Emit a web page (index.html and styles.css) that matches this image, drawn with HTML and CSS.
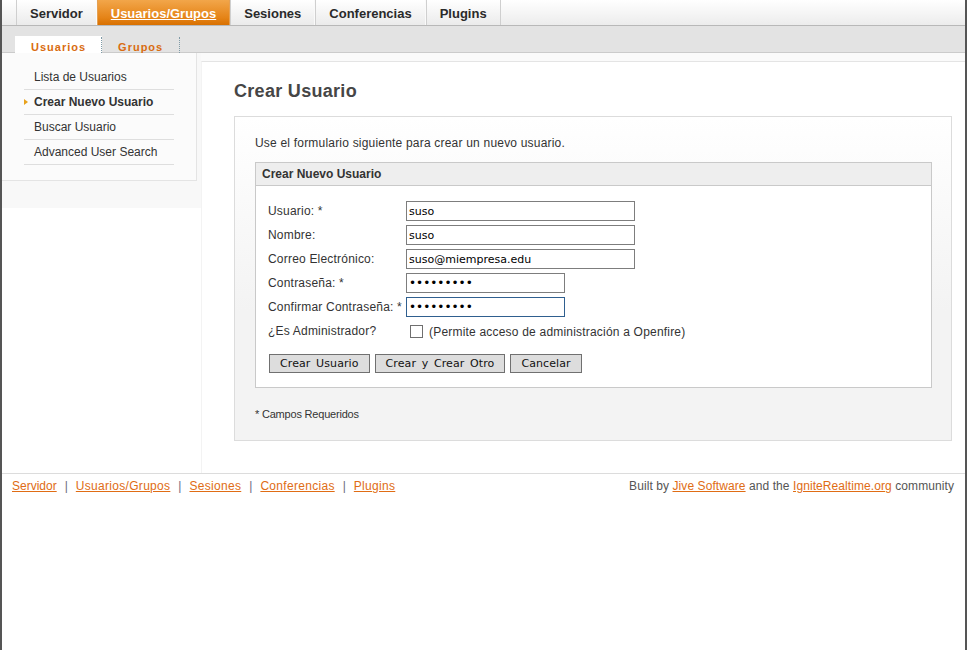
FILE: index.html
```html
<!DOCTYPE html>
<html lang="es">
<head>
<meta charset="utf-8">
<title>Crear Usuario</title>
<link rel="stylesheet" href="styles.css">
</head>
<body>
<div class="frame">
  <div class="tabs">
    <a class="tab" href="#">Servidor</a>
    <a class="tab active" href="#">Usuarios/Grupos</a>
    <a class="tab" href="#">Sesiones</a>
    <a class="tab" href="#">Conferencias</a>
    <a class="tab" href="#">Plugins</a>
  </div>
  <div class="subtabs">
    <a class="subtab active" href="#">Usuarios</a>
    <a class="subtab" href="#">Grupos</a>
  </div>
  <div class="content">
    <div class="sidebar">
      <div class="sidebox">
        <ul class="nav">
          <li><a href="#">Lista de Usuarios</a></li>
          <li class="current"><a href="#">Crear Nuevo Usuario</a></li>
          <li><a href="#">Buscar Usuario</a></li>
          <li><a href="#">Advanced User Search</a></li>
        </ul>
      </div>
    </div>
    <div class="main">
      <div class="main-inner">
        <h1 class="title">Crear Usuario</h1>
        <div class="box">
          <p class="intro">Use el formulario siguiente para crear un nuevo usuario.</p>
          <div class="panel">
            <div class="panel-head">Crear Nuevo Usuario</div>
            <div class="panel-body">
              <div class="fields">
                <label class="lbl">Usuario: *</label>
                <input class="inp wide" type="text" value="suso">
                <label class="lbl">Nombre:</label>
                <input class="inp wide" type="text" value="suso">
                <label class="lbl">Correo Electrónico:</label>
                <input class="inp wide" type="text" value="suso@miempresa.edu">
                <label class="lbl">Contraseña: *</label>
                <input class="inp narrow pw" type="password" value="suso12345">
                <label class="lbl">Confirmar Contraseña: *</label>
                <input class="inp narrow pw focus" type="password" value="suso12345">
                <label class="lbl">¿Es Administrador?</label>
                <div class="check-row"><input class="chk" type="checkbox"><span class="check-text">(Permite acceso de administración a Openfire)</span></div>
              </div>
              <div class="buttons">
                <button class="btn" type="button">Crear Usuario</button>
                <button class="btn" type="button">Crear y Crear Otro</button>
                <button class="btn" type="button">Cancelar</button>
              </div>
            </div>
          </div>
          <p class="req">* Campos Requeridos</p>
        </div>
      </div>
    </div>
  </div>
  <div class="footer">
    <div class="foot-links">
      <a href="#">Servidor</a><span class="sep">|</span><a href="#">Usuarios/Grupos</a><span class="sep">|</span><a href="#">Sesiones</a><span class="sep">|</span><a href="#">Conferencias</a><span class="sep">|</span><a href="#">Plugins</a>
    </div>
    <div class="built">Built by <a href="#">Jive Software</a> and the <a href="#">IgniteRealtime.org</a> community</div>
  </div>
</div>
</body>
</html>
```
FILE: styles.css
```css
* { box-sizing: border-box; }
html, body { margin: 0; padding: 0; background: #fff; }
body { font-family: "Liberation Sans", Arial, sans-serif; font-size: 12px; color: #333; }

.frame {
  width: 967px;
  min-height: 650px;
  border-left: 2px solid #555;
  border-right: 2px solid #555;
  background: #fff;
}

/* top tabs */
.tabs {
  height: 26px;
  display: flex;
  padding-left: 14px;
  background: linear-gradient(#ffffff, #ececec);
  border-bottom: 1px solid #b8b8b8;
}
.tab {
  display: block;
  height: 25px;
  line-height: 27px;
  padding: 0 13px;
  font-size: 13px;
  font-weight: bold;
  color: #2a2a2a;
  text-decoration: none;
  border-left: 1px solid #cfcfcf;
  border-right: 1px solid #fafafa;
  background: linear-gradient(#ffffff, #ebebeb);
}
.tab:last-child { border-right: 1px solid #cfcfcf; }
.tab.active {
  color: #fff;
  text-decoration: underline;
  background: linear-gradient(#f2a64a, #e58418 70%, #d87000);
  border-left-color: #e5a052;
  border-right-color: #e5a052;
}

/* sub tabs */
.subtabs {
  height: 27px;
  display: flex;
  align-items: flex-end;
  padding-left: 13px;
  background: #e3e3e3;
  border-bottom: 1px solid #cbcbcb;
}
.subtab {
  display: block;
  height: 16px;
  line-height: 21px;
  margin-bottom: -1px;
  font-size: 11px;
  font-weight: bold;
  letter-spacing: 1px;
  color: #d96c10;
  text-decoration: none;
  padding: 0 16px;
  border-right: 1px dotted #7f9aa6;
}
.subtab.active {
  background: #fff;
  padding: 0 15px 0 16px;
  box-shadow: 0 -1px 0 #fff;
}

/* content */
.content {
  display: flex;
  height: 420px;
}
.sidebar {
  width: 199px;
  height: 155px;
  flex: none;
  background: #f8f8f8;
}
.sidebox {
  width: 195px;
  height: 128px;
  padding: 12px 0 0 22px;
  border-right: 1px solid #e4e4e4;
  border-bottom: 1px solid #e4e4e4;
  background: #fbfbfb;
}
.nav {
  list-style: none;
  margin: 0;
  padding: 0;
  width: 150px;
}
.nav li {
  height: 25px;
  border-bottom: 1px solid #dedede;
  position: relative;
}
.nav a {
  display: block;
  line-height: 24px;
  padding-left: 10px;
  color: #333;
  text-decoration: none;
  font-size: 12px;
}
.nav li.current a { font-weight: bold; }
.nav li.current::before {
  content: "";
  position: absolute;
  left: 0;
  top: 9px;
  border-left: 4px solid #e8a21c;
  border-top: 3.5px solid transparent;
  border-bottom: 3.5px solid transparent;
}

.main {
  flex: 1;
  padding-top: 8px;
  background: #fafafa;
}
.main-inner {
  height: 100%;
  background: #fff;
  border-top: 1px solid #e4e4e4;
  border-left: 1px solid #f3f3f3;
  padding: 0 13px 0 32px;
}
.title {
  margin: 18px 0 14px;
  font-size: 18px;
  line-height: 22px;
  font-weight: bold;
  color: #464646;
  letter-spacing: 0.3px;
}

.box {
  height: 325px;
  border: 1px solid #dcdcdc;
  background: linear-gradient(#ffffff, #f3f3f3 60%);
  padding: 19px 19px 0 20px;
}
.intro {
  margin: 0 0 11px;
  line-height: 15px;
  letter-spacing: 0.2px;
}
.panel { background: #fff; }
.panel-head {
  height: 24px;
  line-height: 22px;
  border: 1px solid #c9c9c9;
  background: #eeeeee;
  font-weight: bold;
  padding-left: 6px;
}
.panel-body {
  border: 1px solid #c9c9c9;
  border-top: none;
  padding: 15px 12px 14px 12px;
}
.fields {
  display: grid;
  grid-template-columns: 138px auto;
  grid-auto-rows: 20px;
  row-gap: 4px;
  align-items: center;
}
.lbl { line-height: 15px; letter-spacing: 0.2px; }
.inp {
  height: 20px;
  border: 1px solid #7d7d7d;
  padding: 0 2px;
  font-family: "DejaVu Sans", Verdana, sans-serif;
  font-size: 11px;
  color: #000;
  outline: none;
  margin: 0;
}
.inp.pw { font-size: 12px; }
.inp.wide { width: 229px; }
.inp.narrow { width: 159px; }
.inp.focus { border-color: #2f5f8f; }
.check-row {
  display: flex;
  align-items: center;
  height: 20px;
  padding-top: 1px;
}
.check-text { letter-spacing: 0.2px; }
.chk {
  -webkit-appearance: none;
  appearance: none;
  width: 13px;
  height: 13px;
  margin: 0 6px 0 4px;
  border: 1px solid #6f6f6f;
  background: #fff;
}
.buttons {
  display: flex;
  gap: 5px;
  margin-top: 13px;
  padding-left: 1px;
}
.btn {
  height: 19px;
  padding: 0 10px;
  border: 1px solid #707070;
  background: #dddddd;
  font-family: "DejaVu Sans", Verdana, sans-serif;
  font-size: 11px;
  word-spacing: 2px;
  letter-spacing: 0.1px;
  color: #111;
  line-height: 17px;
  margin: 0;
}
.req {
  margin: 20px 0 0;
  font-size: 11px;
  line-height: 13px;
  letter-spacing: -0.2px;
}

/* footer */
.footer {
  border-top: 1px solid #dcdcdc;
  display: flex;
  justify-content: space-between;
  padding: 5px 11px 0 10px;
  line-height: 15px;
  font-size: 12px;
}
.footer a { color: #e06c14; }
.foot-links a { letter-spacing: 0.3px; }
.foot-links a:first-child { letter-spacing: 0; }
.sep { color: #6a6a80; margin: 0 8px; }
.built { color: #555; letter-spacing: 0.08px; }
```
